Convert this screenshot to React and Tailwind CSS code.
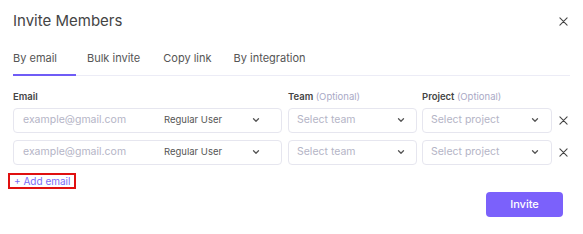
import React from "react";

const Chevron = () => (
  <svg width="10" height="10" viewBox="0 0 10 10" fill="none" stroke="#555" strokeWidth="1.3" strokeLinecap="round" strokeLinejoin="round">
    <path d="M2.5 3.8 L5 6.2 L7.5 3.8" />
  </svg>
);

const XIcon = ({ size = 10 }) => (
  <svg width={size} height={size} viewBox="0 0 10 10" fill="none" stroke="#444" strokeWidth="1.2" strokeLinecap="round">
    <path d="M1 1 L9 9 M9 1 L1 9" />
  </svg>
);

const Row = () => (
  <div className="flex items-center h-[25px]">
    <div className="w-[269px] h-full border border-[#e6e6ef] rounded-[4px] flex items-center pl-[9px] pr-[20px]">
      <span className="text-[10.5px] text-[#b4b4c6] w-[141px]">example@gmail.com</span>
      <span className="text-[9.5px] text-[#555] flex-1">Regular User</span>
      <Chevron />
    </div>
    <div className="ml-[6px] w-[129px] h-full border border-[#e6e6ef] rounded-[4px] flex items-center pl-[8px] pr-[10px]">
      <span className="text-[10.5px] text-[#b4b4c6] flex-1">Select team</span>
      <Chevron />
    </div>
    <div className="ml-[5px] w-[130px] h-full border border-[#e6e6ef] rounded-[4px] flex items-center pl-[8px] pr-[11px]">
      <span className="text-[10.5px] text-[#b4b4c6] flex-1">Select project</span>
      <Chevron />
    </div>
    <div className="ml-[7px] flex items-center">
      <XIcon size={9} />
    </div>
  </div>
);

export default function App() {
  return (
    <div className="w-[583px] h-[234px] bg-white px-[13px] pt-[11px]" style={{ fontFamily: "Inter, 'Noto Sans', sans-serif" }}>
      <div className="flex items-center justify-between pr-[2px]">
        <h1 className="text-[15px] text-[#444] font-normal leading-[20px]">Invite Members</h1>
        <XIcon size={9} />
      </div>
      <div className="mt-[19px] flex border-b border-[#ececf6] w-[557px] text-[11px] text-[#555]">
        <div className="w-[63px] pb-[7px] border-b-2 border-[#6f5cf6] -mb-px">By email</div>
        <div className="ml-[11px] pb-[7px]">Bulk invite</div>
        <div className="ml-[23px] pb-[7px]">Copy link</div>
        <div className="ml-[22px] pb-[7px]">By integration</div>
      </div>
      <div className="mt-[15px] flex text-[9.5px] font-semibold text-[#444] leading-[12px]">
        <div className="w-[275px]">Email</div>
        <div className="w-[134px]">Team <span className="font-normal text-[#a9a9c6]">(Optional)</span></div>
        <div>Project <span className="font-normal text-[#a9a9c6]">(Optional)</span></div>
      </div>
      <div className="mt-[5px] flex flex-col gap-[7px]">
        <Row />
        <Row />
      </div>
      <div className="mt-[8px] -ml-[5px] inline-flex items-center border-2 border-[#e01010] px-[4px] h-[16px]">
        <span className="text-[10px] text-[#7b6cf6] leading-[12px]">+ Add email</span>
      </div>
      <div className="flex justify-end pr-[7px] mt-[1px]">
        <button className="w-[77px] h-[25px] rounded-[4px] bg-[#7b61fb] text-white text-[11px] font-medium">Invite</button>
      </div>
    </div>
  );
}
